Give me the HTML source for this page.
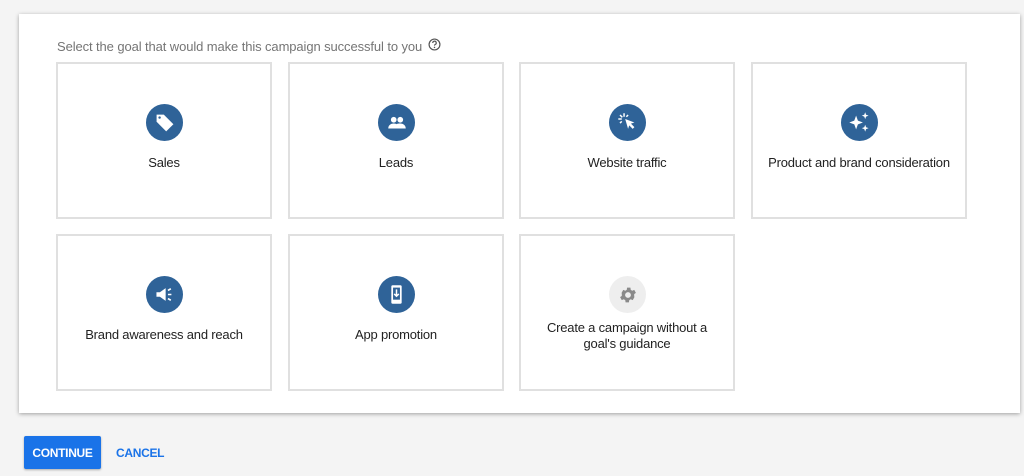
<!DOCTYPE html>
<html><head><meta charset="utf-8"><style>
body{margin:0;width:1024px;height:476px;background:#f4f4f4;font-family:"Liberation Sans",Arial,sans-serif;position:relative;overflow:hidden}
.card{position:absolute;left:19px;top:14px;width:1001px;height:399px;background:#fff;box-shadow:0 1px 4px rgba(0,0,0,.35)}
.hd{position:absolute;left:57px;top:38px;font-size:13px;color:#757575;letter-spacing:-0.1px}
.hd svg{vertical-align:0px;margin-left:2px}
.t{position:absolute;width:212px;height:153px;border:2px solid #e0e0e0;box-sizing:content-box;background:#fff}
.ic{position:absolute;left:88px;top:40px;width:37px;height:37px;border-radius:50%;background:#2f6398;display:flex;align-items:center;justify-content:center}
.lb{position:absolute;left:0;right:0;top:91px;text-align:center;font-size:13px;color:#222;line-height:16px;letter-spacing:-0.2px}
.btn{position:absolute;left:24px;top:436px;width:77px;height:33px;background:#1a73e8;color:#fff;font-size:12px;font-weight:bold;display:flex;align-items:center;justify-content:center;border-radius:2px;box-shadow:0 1px 2px rgba(0,0,0,.3);letter-spacing:-0.3px}
.cn{position:absolute;left:116px;top:446px;color:#1a73e8;font-size:12px;font-weight:bold;letter-spacing:-0.3px}
</style></head><body>
<div class="card"></div>
<div class="hd">Select the goal that would make this campaign successful to you <svg width="13" height="13" viewBox="0 0 12 12"><circle cx="6" cy="6" r="5" fill="none" stroke="#555" stroke-width="1.1"/><path d="M4.4 4.6a1.6 1.6 0 1 1 2.2 1.4c-.5.2-.6.5-.6 1" fill="none" stroke="#555" stroke-width="1.1"/><circle cx="6" cy="8.7" r=".7" fill="#555"/></svg></div>

<div class="t" style="left:56px;top:62px"><div class="ic"><svg width="24" height="24" viewBox="0 0 20 20"><path d="M3 3h6l8 8-6 6-8-8z" fill="#fff"/><circle cx="5.5" cy="5.5" r="1" fill="#2f6398"/></svg></div><div class="lb">Sales</div></div>
<div class="t" style="left:288px;top:62px"><div class="ic"><svg width="24" height="20" viewBox="0 0 22 18"><circle cx="8" cy="6" r="2.6" fill="#fff"/><circle cx="14" cy="6" r="2.6" fill="#fff"/><path d="M3 14c0-3 2.5-4.5 5-4.5s5 1.5 5 4.5zM12 14c0-2-.5-3-1.3-4 1-.4 2-.5 3.3-.5 2.5 0 5 1.5 5 4.5z" fill="#fff"/></svg></div><div class="lb">Leads</div></div>
<div class="t" style="left:519px;top:62px"><div class="ic"><svg width="23" height="23" viewBox="0 0 20 20"><path d="M8 7l8 3-3 1 3 3-1.5 1.5-3-3-1 3z" fill="#fff"/><path d="M7 2v3M2 7h3M3.5 3.5l2 2M10.5 3.5l-1.5 1.5M3.5 10.5l1.5-1.5" stroke="#fff" stroke-width="1.3"/></svg></div><div class="lb">Website traffic</div></div>
<div class="t" style="left:751px;top:62px"><div class="ic"><svg width="25" height="25" viewBox="0 0 22 22"><path d="M8 5l1.6 4.4L14 11l-4.4 1.6L8 17l-1.6-4.4L2 11l4.4-1.6z" fill="#fff"/><path d="M16 2l.8 2.2L19 5l-2.2.8L16 8l-.8-2.2L13 5l2.2-.8zM16 13l.8 2.2 2.2.8-2.2.8L16 19l-.8-2.2L13 16l2.2-.8z" fill="#fff"/></svg></div><div class="lb">Product and brand consideration</div></div>

<div class="t" style="left:56px;top:234px"><div class="ic"><svg width="23" height="23" viewBox="0 0 20 20"><path d="M3 8h3l5-3.5v11L6 12H3z" fill="#fff"/><path d="M13 10h3M13 6.5l2.5-1.5M13 13.5l2.5 1.5" stroke="#fff" stroke-width="1.4"/></svg></div><div class="lb">Brand awareness and reach</div></div>
<div class="t" style="left:288px;top:234px"><div class="ic"><svg width="23" height="23" viewBox="0 0 20 20"><rect x="5.5" y="2" width="9" height="16" rx="1.2" fill="#fff"/><rect x="7" y="4" width="6" height="10.5" fill="#2f6398"/><path d="M10 5.5v6M8 9.5l2 2 2-2" stroke="#fff" stroke-width="1.3" fill="none"/></svg></div><div class="lb">App promotion</div></div>
<div class="t" style="left:519px;top:234px"><div class="ic" style="background:#eeeeee"><svg width="20" height="20" viewBox="0 0 24 24"><path fill="#8a8a8a" d="M19.4 13a7.5 7.5 0 0 0 0-2l2.1-1.6-2-3.5-2.5 1a7 7 0 0 0-1.700-1l-.4-2.7h-4l-.4 2.7a7 7 0 0 0-1.7 1l-2.5-1-2 3.5L4.6 11a7.5 7.5 0 0 0 0 2l-2.1 1.6 2 3.5 2.5-1a7 7 0 0 0 1.7 1l.4 2.7h4l.4-2.7a7 7 0 0 0 1.7-1l2.5 1 2-3.5zM12 15.5a3.5 3.5 0 1 1 0-7 3.5 3.5 0 0 1 0 7z"/></svg></div><div class="lb" style="top:84px">Create a campaign without a<br>goal's guidance</div></div>

<div class="btn">CONTINUE</div>
<div class="cn">CANCEL</div>
</body></html>
